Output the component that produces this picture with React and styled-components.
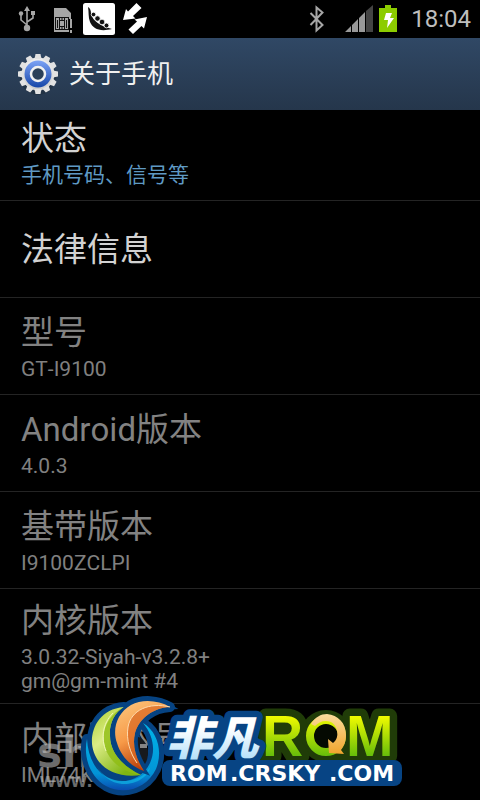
import React from 'react';
import styled, {createGlobalStyle} from 'styled-components';

const GlobalStyle = createGlobalStyle`
  * {
    box-sizing: border-box;
  }
  body {
    margin: 0;
    background: #000;
    font-family: Roboto, "Noto Sans CJK SC", sans-serif;
    font-kerning: none;
  }
`;
const Page = styled.div`
  position: relative;
  min-height: 100vh;
  overflow: hidden;
  background: #000;
`;
const StatusBar = styled.div`
  display: flex;
  justify-content: space-between;
  height: 38px;
  padding: 0 9px 0 15px;
  background: #000;
`;
const StatusGroup = styled.div`
  display: flex;
  align-items: center;
  gap: ${props => props.$gap}px;
  svg {
    display: block;
  }
`;
const Clock = styled.time`
  padding-left: 8px;
  color: #bebebe;
  font-size: 24px;
  line-height: 40px;
`;
const Header = styled.header`
  position: relative;
  z-index: 1;
  display: flex;
  align-items: center;
  gap: 9px;
  height: 72px;
  padding: 0 16px;
  background: linear-gradient(#304865, #25364b);
  svg {
    display: block;
  }
  h1 {
    margin: 0;
    color: #f0f0f0;
    font-size: 26px;
    font-weight: 400;
    line-height: 36px;
  }
`;
/* the list is scrolled a little way under the header */
const List = styled.ul`
  margin: -6px 0 0;
  padding: 0;
  list-style: none;
`;
const Item = styled.li`
  border-bottom: 1px solid #242424;
  &:last-child {
    border-bottom: none;
  }
`;
const Row = styled.div`
  display: flex;
  flex-direction: column;
  justify-content: center;
  width: 100%;
  min-height: 96px;
  padding: 11px 21px 10px;
  border: none;
  background: none;
  color: ${props => (props.$enabled ? '#d2d2d2' : '#828282')};
  font-family: inherit;
  text-align: left;
`;
const Title = styled.span`
  font-size: 33px;
  line-height: 42px;
`;
const Summary = styled.span`
  margin-top: 3px;
  color: ${props => (props.$enabled ? '#5f9ac4' : '#808080')};
  font-size: 21px;
  line-height: 24px;
  white-space: pre-line;
`;
const Overlay = styled.svg`
  position: absolute;
  bottom: 0;
  left: 30px;
  pointer-events: none;
`;

const rows = [
  {title: '状态', summary: '手机号码、信号等', enabled: true},
  {title: '法律信息', enabled: true},
  {title: '型号', summary: 'GT-I9100'},
  {title: 'Android版本', summary: '4.0.3'},
  {title: '基带版本', summary: 'I9100ZCLPI'},
  {title: '内核版本', summary: '3.0.32-Siyah-v3.2.8+\ngm@gm-mint #4'},
  {title: '内部版本号', summary: 'IML74K'},
];

const UsbIcon = () => (
  <svg width="24" height="38" viewBox="15 0 24 38" fill="#a6a6a6" stroke="#a6a6a6" strokeWidth="1.6">
    <path d="M27 10v18M27 25l-6-5v-6M27 22l6-4v-4" fill="none" />
    <path d="M27 6l3 5h-6z" stroke="none" />
    <circle cx="27" cy="28" r="3.2" stroke="none" />
    <circle cx="21" cy="13.5" r="2.2" stroke="none" />
    <rect x="31" y="11" width="4" height="4" stroke="none" />
  </svg>
);

const SimIcon = () => (
  <svg width="28" height="38" viewBox="47 0 28 38">
    <path d="M54 8h12l5 5v6h-2v13H54z" fill="#a6a6a6" />
    <rect x="55.5" y="17.5" width="13" height="12" fill="#a6a6a6" stroke="#111" />
    <rect x="59.5" y="20.5" width="5" height="6" fill="#a6a6a6" stroke="#111" />
    <path d="M59.5 17v4M62 17v3M64.5 17v4M59.5 26v4M62 27v3M64.5 26v4M57.5 20v8M66.5 20v8" stroke="#111" />
    <path d="M70 19h2v9h-2zM70 30h2v3h-2z" fill="#a6a6a6" />
  </svg>
);

const PeaIcon = () => (
  <svg width="32" height="38" viewBox="83 0 32 38">
    <rect x="83" y="3" width="32" height="32" rx="2.5" fill="#fff" />
    <path d="M88 7c2 1 3 3 3 7 2 7 9 12 21 15-12 3-19 0-22-7-2-5-1-10-2-15z" fill="#111" />
    <g fill="#111" stroke="#fff" strokeWidth=".8">
      <circle cx="93.5" cy="14.5" r="2.3" />
      <circle cx="97.5" cy="18.5" r="2.7" />
      <circle cx="102" cy="22" r="2.8" />
      <circle cx="106.5" cy="25.5" r="2.4" />
    </g>
  </svg>
);

const SyncIcon = () => (
  <svg width="24" height="38" viewBox="123 0 24 38" fill="#fff">
    <path d="M123 20L126 9L128 11.5L136.5 3L141.5 8L133 16L135.500 18.500Z" />
    <path d="M147 17L144 28.500L141.500 26L133 34L128.500 29.500L137 21.500L134.500 19.500Z" />
  </svg>
);

const BluetoothIcon = () => (
  <svg width="34" height="38" viewBox="305 0 34 38" fill="none" stroke="#a6a6a6" strokeWidth="2">
    <path d="M310.5 13l12 12-6 5.5v-23l6 5-12 12.5" />
  </svg>
);

const SignalIcon = () => (
  <svg width="28" height="38" viewBox="345 0 28 38">
    <path d="M345 32l6-6v6zM352 32v-7l6-6v13zM359 32V18l6-6v20z" fill="#999" />
    <path d="M366 32V11l7-6v27z" fill="#444" />
  </svg>
);

const BatteryIcon = () => (
  <svg width="18" height="38" viewBox="379 0 18 38">
    <path d="M379 8h6V5h6v3h6v24h-18z" fill="#8ccc00" />
    <path d="M386 13h6l-2 5h4l-7 10 1-8h-4z" fill="#fff" />
  </svg>
);

const teeth = Array.from({length: 12}, (_, i) => i * 30);

const GearIcon = () => (
  <svg width="44" height="44" viewBox="-22 -22 44 44">
    <defs>
      <linearGradient id="gear" x1="0" y1="-20" x2="0" y2="20" gradientUnits="userSpaceOnUse">
        <stop offset="0" stopColor="#f4f4f4" />
        <stop offset="1" stopColor="#c8c8c8" />
      </linearGradient>
      <linearGradient id="disc" x1="0" y1="0" x2="0" y2="1">
        <stop offset="0" stopColor="#7da3f6" />
        <stop offset="1" stopColor="#1646a8" />
      </linearGradient>
    </defs>
    <ellipse cx="0" cy="2" rx="18" ry="19" fill="#1b2938" opacity=".5" />
    <circle r="16.5" fill="url(#gear)" />
    {teeth.map(angle => (
      <path key={angle} d="M-3.5-15l1-5h5l1 5z" fill="#e2e2e2" transform={`rotate(${angle})`} />
    ))}
    <circle r="13.5" fill="url(#disc)" />
    <circle r="7" fill="#2b4059" stroke="#f1f1f1" strokeWidth="2.5" />
  </svg>
);

const leaf = 'M124 707C100 709 91 728 92 744C94 764 112 779 141 775C122 766 110 752 110 736C109 724 114 713 124 707z';
const flame = 'M170 707C158 700 142 699 131 705C117 713 112 729 117 743C121 757 132 767 144 771C136 759 132 746 135 733C139 719 152 708 170 707z';
const wave = 'M87 739C83 757 90 777 106 786C125 796 147 788 156 769C163 752 158 732 143 723C153 735 156 750 150 763C143 778 127 784 113 780C98 775 88 760 87 739z';

const LogoOverlay = () => (
  <Overlay width="380" height="110" viewBox="30 690 380 110">
    <defs>
      <linearGradient id="leaf" x1="0" y1="0" x2=".6" y2="1">
        <stop offset="0" stopColor="#a9cf2c" />
        <stop offset=".45" stopColor="#dcec86" />
        <stop offset="1" stopColor="#7fb512" />
      </linearGradient>
      <linearGradient id="flame" x1="0" y1="0" x2=".4" y2="1">
        <stop offset="0" stopColor="#fdc981" />
        <stop offset=".55" stopColor="#f79a48" />
        <stop offset="1" stopColor="#b93d09" />
      </linearGradient>
      <linearGradient id="wave" x1="0" y1="0" x2="0" y2="1">
        <stop offset="0" stopColor="#00b4e8" />
        <stop offset=".75" stopColor="#0294d7" />
        <stop offset="1" stopColor="#0a4bb0" />
      </linearGradient>
      <linearGradient id="ice" x1="0" y1="714" x2="0" y2="759" gradientUnits="userSpaceOnUse">
        <stop offset=".3" stopColor="#fff" />
        <stop offset="1" stopColor="#b5e0fa" />
      </linearGradient>
      <linearGradient id="lime" x1="0" y1="716" x2="0" y2="756" gradientUnits="userSpaceOnUse">
        <stop offset="0" stopColor="#f1fb00" />
        <stop offset="1" stopColor="#66bd0a" />
      </linearGradient>
      <linearGradient id="amber" x1="0" y1="0" x2="0" y2="1">
        <stop offset="0" stopColor="#fbdc9c" />
        <stop offset="1" stopColor="#f0a52d" />
      </linearGradient>
    </defs>

    <g fill="#b5b5b5" opacity=".6" fontWeight="700">
      <text x="37" y="767" fontSize="42" fontFamily="DejaVu Sans, sans-serif">sh</text>
      <text x="40" y="787" fontSize="20" fontFamily="Liberation Sans, sans-serif">www.</text>
    </g>

    <g strokeLinejoin="round" strokeLinecap="round">
      <g fill="none" stroke="#203c08" strokeWidth="20">
        <circle cx="326" cy="736" r="16" />
        <path d="M333 742l8 10" />
      </g>
      <g fill="url(#lime)" stroke="#203c08" strokeWidth="15" paintOrder="stroke" fontSize="57" fontWeight="700" fontFamily="Liberation Sans, sans-serif">
        <text x="262" y="756">R</text>
        <text x="346" y="756">M</text>
      </g>
      <g fill="url(#ice)" stroke="#074484" strokeWidth="13" paintOrder="stroke" fontSize="46" fontWeight="900" fontStyle="italic" fontFamily="Noto Sans CJK SC, sans-serif">
        <text x="166" y="755">非凡</text>
      </g>
      <circle cx="326" cy="736" r="16" fill="#050a02" stroke="url(#lime)" strokeWidth="8" />
      <path d="M311 724c4-7 10-10 16-10 11 1 19 9 19 21 0 7-2 11-5 15l3 4-15-1-1-14 5 4c4-3 5-8 4-12-1-6-5-10-11-10-5 0-8 2-11 5z" fill="url(#amber)" />
      <rect x="162" y="760" width="240" height="26" rx="8" fill="#074484" />
      <text y="781" fill="#fff" fontSize="22" fontWeight="700" fontFamily="DejaVu Sans, sans-serif">
        <tspan x="170">ROM</tspan>
        <tspan x="230">.CRSKY</tspan>
        <tspan x="329">.COM</tspan>
      </text>
      <g fill="#064382" stroke="#064382" strokeWidth="10">
        <path d={wave} />
        <path d={leaf} />
        <path d={flame} />
        <path d="M94 735L120 712L136 740L144 765L120 785L92 765z" />
      </g>
    </g>

    <path d="M138 737c5 1 9 7 10 14 0 6-1 10-3 13-5-8-8-17-7-27z" fill="#17191c" />
    <path d="M140 744h7v4h-7z" fill="#858585" />
    <path d={wave} fill="url(#wave)" />
    <path d="M96 765c8 15 24 19 39 14 7-2 12-7 15-12-1 10-15 18-28 17-11-1-20-8-26-19z" fill="#12c0ea" opacity=".6" />
    <path d={leaf} fill="url(#leaf)" />
    <path d="M124 707c-14 7-22 20-20 35 2 17 17 30 37 33-19-9-31-23-31-39-1-12 4-23 14-29z" fill="#8fbd13" opacity=".8" />
    <path d="M113 713c-11 11-12 26-7 38" fill="none" stroke="#eff7b6" />
    <path d={flame} fill="url(#flame)" stroke="#064382" strokeWidth="5" paintOrder="stroke" />
    <path d="M170 707c-21-5-39 3-42 20-3 16 4 33 16 44-8-12-12-25-9-38 4-14 17-25 35-26z" fill="#d6611c" opacity=".65" />
    <path d="M170 707c-21-5-39 3-42 20-2 13 2 26 9 36" fill="none" stroke="#ffdcae" />
  </Overlay>
);

let SettingRow = ({title, summary, enabled}) => {
  return (
    <Item>
      <Row as={enabled ? 'button' : 'div'} $enabled={enabled}>
        <Title>{title}</Title>
        {summary && <Summary $enabled={enabled}>{summary}</Summary>}
      </Row>
    </Item>
  )
}

let App = () => {
  return (
    <Page>
      <GlobalStyle />
      <StatusBar>
        <StatusGroup $gap={8}>
          <UsbIcon />
          <SimIcon />
          <PeaIcon />
          <SyncIcon />
        </StatusGroup>
        <StatusGroup $gap={6}>
          <BluetoothIcon />
          <SignalIcon />
          <BatteryIcon />
          <Clock>18:04</Clock>
        </StatusGroup>
      </StatusBar>
      <Header>
        <GearIcon />
        <h1>关于手机</h1>
      </Header>
      <List>
        {rows.map(row => <SettingRow key={row.title} {...row} />)}
      </List>
      <LogoOverlay />
    </Page>
  )
}

export default App;
